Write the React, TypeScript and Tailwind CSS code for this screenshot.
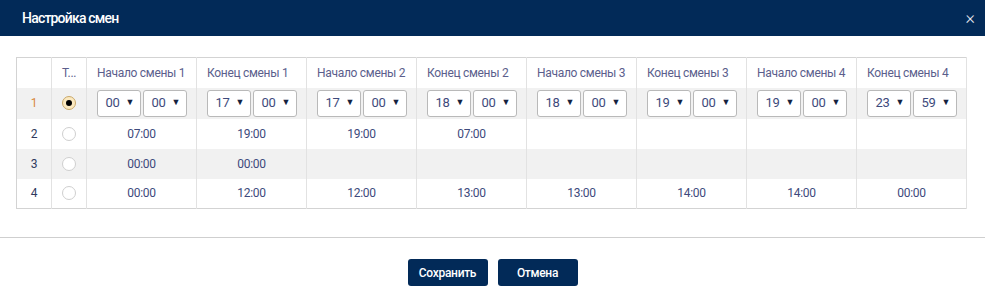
import React from "react";

const font = { fontFamily: "Roboto, 'Noto Sans', sans-serif" };

const headers = [
  "Начало смены 1",
  "Конец смены 1",
  "Начало смены 2",
  "Конец смены 2",
  "Начало смены 3",
  "Конец смены 3",
  "Начало смены 4",
  "Конец смены 4",
];

const firstRow = [
  ["00", "00"],
  ["17", "00"],
  ["17", "00"],
  ["18", "00"],
  ["18", "00"],
  ["19", "00"],
  ["19", "00"],
  ["23", "59"],
];

const rows = [
  ["07:00", "19:00", "19:00", "07:00", "", "", "", ""],
  ["00:00", "00:00", "", "", "", "", "", ""],
  ["00:00", "12:00", "12:00", "13:00", "13:00", "14:00", "14:00", "00:00"],
];

const Select = ({ value }: { value: string }) => (
  <div className="flex h-[27px] w-[44px] items-center justify-end gap-[6px] rounded-[3px] border border-[#b9b9b9] bg-white pr-[6px] text-[13px] tracking-[-0.3px] text-[#3d4a7c]">
    <span>{value}</span>
    <span className="text-[9px] text-[#14223f]">▼</span>
  </div>
);

const Radio = ({ checked }: { checked?: boolean }) =>
  checked ? (
    <div className="mx-auto flex h-[14px] w-[14px] items-center justify-center rounded-full border border-[#c9a86a] bg-[#fbe9c0]">
      <div className="h-[6px] w-[6px] rounded-full bg-black" />
    </div>
  ) : (
    <div className="mx-auto h-[14px] w-[14px] rounded-full border border-[#cfcfcf] bg-white" />
  );

export default function App() {
  return (
    <div className="h-[292px] w-[985px] bg-white" style={font}>
      <div className="flex h-[36px] items-center justify-between bg-[#022a58] pl-[22px] pr-[10px]">
        <span className="text-[14px] font-medium tracking-[-0.8px] text-white">Настройка смен</span>
        <span className="text-[18px] font-light leading-none text-[#e6ebf2]">×</span>
      </div>
      <div className="px-[16px] pt-[21px]">
        <table className="w-[950px] table-fixed border-collapse border border-[#d3d3d3] text-[12px] tracking-[-0.3px]">
          <colgroup>
            <col className="w-[35px]" />
            <col className="w-[35px]" />
            {headers.map((h) => (
              <col key={h} className="w-[110px]" />
            ))}
          </colgroup>
          <thead>
            <tr className="h-[30px] text-[#5b5e8c]">
              <th className="border-r border-[#e2e2e2] font-normal" />
              <th className="border-r border-[#e2e2e2] pl-[10px] text-left font-normal">Т...</th>
              {headers.map((h) => (
                <th key={h} className="border-r border-[#e2e2e2] pl-[10px] text-left font-normal">
                  {h}
                </th>
              ))}
            </tr>
          </thead>
          <tbody>
            <tr className="h-[31px] bg-[#f1f1f1]">
              <td className="border-r border-[#e2e2e2] text-center text-[#d98a3e]">1</td>
              <td className="border-r border-[#e2e2e2]">
                <Radio checked />
              </td>
              {firstRow.map(([a, b], i) => (
                <td key={i} className="border-r border-[#e2e2e2] pl-[10px]">
                  <div className="flex gap-[2px]">
                    <Select value={a} />
                    <Select value={b} />
                  </div>
                </td>
              ))}
            </tr>
            {rows.map((r, ri) => (
              <tr key={ri} className={`h-[30px] ${ri === 1 ? "bg-[#f1f1f1]" : "bg-white"}`}>
                <td className="border-r border-[#e2e2e2] text-center text-[#2f3a5e]">{ri + 2}</td>
                <td className="border-r border-[#e2e2e2]">
                  <Radio />
                </td>
                {r.map((v, i) => (
                  <td key={i} className="border-r border-[#e2e2e2] text-center text-[#3d4a7c]">
                    {v}
                  </td>
                ))}
              </tr>
            ))}
          </tbody>
        </table>
      </div>
      <div className="mt-[28px] border-t border-[#cfcfcf]" />
      <div className="flex justify-center gap-[10px] pt-[21px]">
        <button className="h-[27px] w-[80px] rounded-[3px] bg-[#022a58] text-[12px] font-medium tracking-[-0.3px] text-white">
          Сохранить
        </button>
        <button className="h-[27px] w-[80px] rounded-[3px] bg-[#022a58] text-[12px] font-medium tracking-[-0.3px] text-white">
          Отмена
        </button>
      </div>
    </div>
  );
}
